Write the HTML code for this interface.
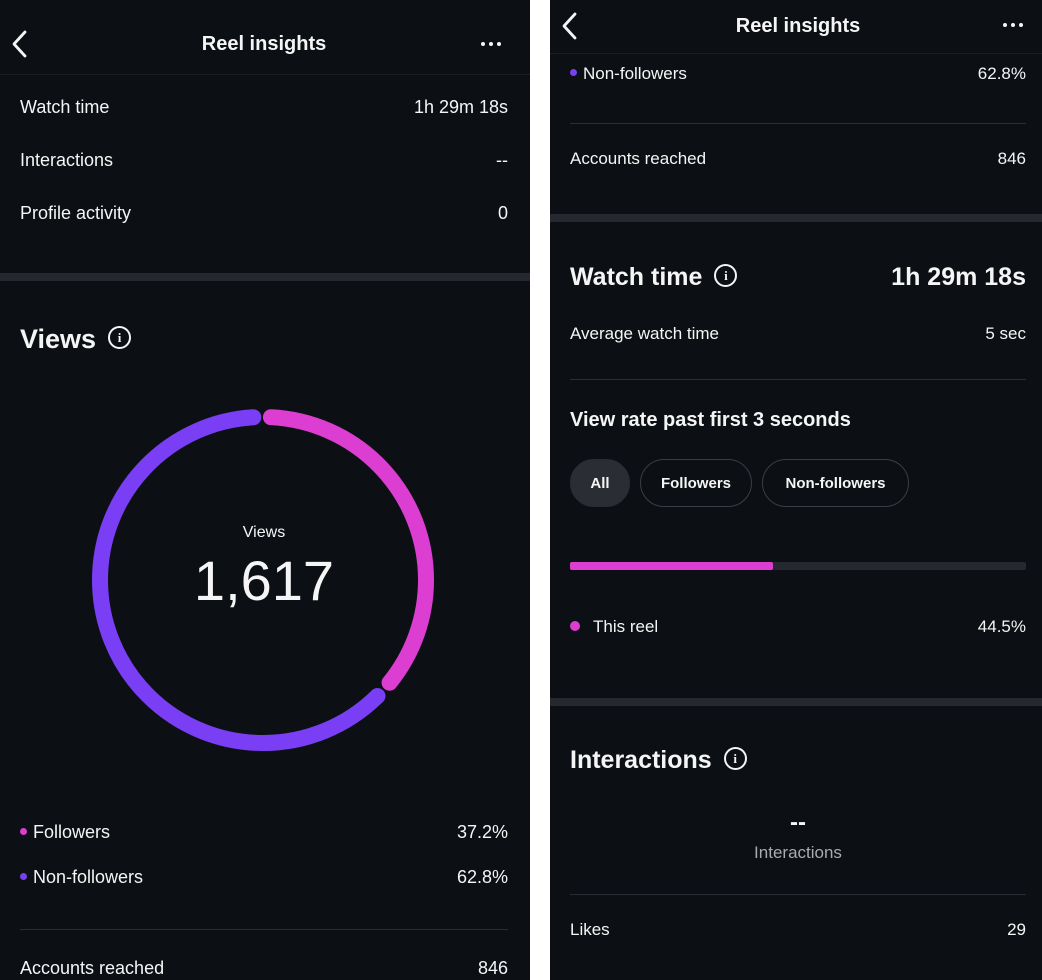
<!DOCTYPE html>
<html><head><meta charset="utf-8"><style>
*{margin:0;padding:0;box-sizing:border-box}
body{width:1042px;height:980px;background:#fff;font-family:"Liberation Sans",Arial,sans-serif;color:#f5f5f5;position:relative;overflow:hidden}
.p{position:absolute;top:0;height:980px;background:#0c1014;overflow:hidden}
.t{position:absolute;white-space:nowrap;font-size:18px;line-height:20px}
.r{text-align:right}
.b{font-weight:bold}
.bar{position:absolute;left:0;right:0;height:8px;background:#25282e}
.ln{position:absolute;height:1px;background:#2a2d33}
.dot{display:inline-block;width:7px;height:7px;border-radius:50%;margin-right:6px;vertical-align:middle;position:relative;top:-2px}
.info{display:inline-block;width:23px;height:23px;border:2px solid #f5f5f5;border-radius:50%;font:bold 13px/19px "Liberation Serif",serif;text-align:center;vertical-align:middle;margin-left:12px;position:relative;top:-3px}
.pill{position:absolute;height:48px;border-radius:24px;border:1px solid #3a3d43;font-size:15px;font-weight:bold;line-height:48px;text-align:center}
.dots{position:absolute;display:flex;gap:4px}
.dots i{width:4px;height:4px;border-radius:50%;background:#f5f5f5}
</style></head><body>

<div class="p" style="left:0;width:530px">
  <svg style="position:absolute;left:8px;top:29px" width="22" height="30"><path d="M17 3 L6 15 L17 27" stroke="#f5f5f5" stroke-width="2.8" fill="none" stroke-linecap="round" stroke-linejoin="round"/></svg>
  <div class="t b" style="left:0;width:528px;text-align:center;top:34px;font-size:20px">Reel insights</div>
  <div class="dots" style="left:481px;top:42px"><i></i><i></i><i></i></div>
  <div class="ln" style="left:0;right:0;top:74px;background:#1a1d22"></div>
  <div class="t" style="left:20px;top:97px">Watch time</div><div class="t r" style="right:22px;top:97px">1h 29m 18s</div>
  <div class="t" style="left:20px;top:150px">Interactions</div><div class="t r" style="right:22px;top:150px">--</div>
  <div class="t" style="left:20px;top:203px">Profile activity</div><div class="t r" style="right:22px;top:203px">0</div>
  <div class="bar" style="top:273px"></div>
  <div class="t b" style="left:20px;top:325px;font-size:27px;line-height:28px">Views<span class="info">i</span></div>
  <svg style="position:absolute;left:0;top:0" width="530" height="980">
    <g transform="rotate(-90 263 580)">
      <circle cx="263" cy="580" r="163" fill="none" stroke="#dc3ed2" stroke-width="16" stroke-linecap="round" stroke-dasharray="359 2000" stroke-dashoffset="-8"/>
      <circle cx="263" cy="580" r="163" fill="none" stroke="#7a3ff5" stroke-width="16" stroke-linecap="round" stroke-dasharray="629 2000" stroke-dashoffset="-385"/>
    </g>
  </svg>
  <div class="t" style="left:0;width:528px;text-align:center;top:523px;font-size:16px">Views</div>
  <div class="t" style="left:0;width:528px;text-align:center;top:553px;font-size:56px;line-height:56px">1,617</div>
  <div class="t" style="left:20px;top:822px"><span class="dot" style="background:#dc3ed2"></span>Followers</div><div class="t r" style="right:22px;top:822px">37.2%</div>
  <div class="t" style="left:20px;top:867px"><span class="dot" style="background:#7a3ff5"></span>Non-followers</div><div class="t r" style="right:22px;top:867px">62.8%</div>
  <div class="ln" style="left:20px;width:488px;top:929px"></div>
  <div class="t" style="left:20px;top:958px">Accounts reached</div><div class="t r" style="right:22px;top:958px">846</div>
</div>

<div class="p" style="left:550px;width:492px">
  <svg style="position:absolute;left:8px;top:11px" width="22" height="30"><path d="M17 3 L6 15 L17 27" stroke="#f5f5f5" stroke-width="2.8" fill="none" stroke-linecap="round" stroke-linejoin="round"/></svg>
  <div class="t b" style="left:0;width:496px;text-align:center;top:16px;font-size:20px">Reel insights</div>
  <div class="dots" style="left:453px;top:23px"><i></i><i></i><i></i></div>
  <div class="ln" style="left:0;right:0;top:53px;background:#1a1d22"></div>
  <div class="t" style="left:20px;top:64px;font-size:17px"><span class="dot" style="background:#7a3ff5"></span>Non-followers</div><div class="t r" style="right:16px;top:64px;font-size:17px">62.8%</div>
  <div class="ln" style="left:20px;right:16px;top:123px"></div>
  <div class="t" style="left:20px;top:149px;font-size:17px">Accounts reached</div><div class="t r" style="right:16px;top:149px;font-size:17px">846</div>
  <div class="bar" style="top:214px"></div>
  <div class="t b" style="left:20px;top:263px;font-size:25px;line-height:28px">Watch time<span class="info">i</span></div>
  <div class="t b r" style="right:16px;top:263px;font-size:25px;line-height:28px">1h 29m 18s</div>
  <div class="t" style="left:20px;top:324px;font-size:17px">Average watch time</div><div class="t r" style="right:16px;top:324px;font-size:17px">5 sec</div>
  <div class="ln" style="left:20px;right:16px;top:379px"></div>
  <div class="t b" style="left:20px;top:410px;font-size:20px">View rate past first 3 seconds</div>
  <div class="pill" style="left:20px;width:60px;top:459px;background:#2a2d33;border-color:#2a2d33">All</div>
  <div class="pill" style="left:90px;width:112px;top:459px">Followers</div>
  <div class="pill" style="left:212px;width:147px;top:459px">Non-followers</div>
  <div style="position:absolute;left:20px;right:16px;top:562px;height:8px;background:#25282e;border-radius:2px"></div>
  <div style="position:absolute;left:20px;width:203px;top:562px;height:8px;background:#dc3ed2;border-radius:2px"></div>
  <div class="t" style="left:20px;top:617px;font-size:17px"><span class="dot" style="background:#dc3ed2;width:10px;height:10px;margin-right:13px"></span>This reel</div><div class="t r" style="right:16px;top:617px;font-size:17px">44.5%</div>
  <div class="bar" style="top:698px"></div>
  <div class="t b" style="left:20px;top:746px;font-size:25px;line-height:28px">Interactions<span class="info">i</span></div>
  <div class="t b" style="left:0;width:496px;text-align:center;top:813px;font-size:24px">--</div>
  <div class="t" style="left:0;width:496px;text-align:center;top:843px;font-size:17px;color:#a8abb0">Interactions</div>
  <div class="ln" style="left:20px;right:16px;top:894px"></div>
  <div class="t" style="left:20px;top:920px;font-size:17px">Likes</div><div class="t r" style="right:16px;top:920px;font-size:17px">29</div>
</div>
</body></html>
